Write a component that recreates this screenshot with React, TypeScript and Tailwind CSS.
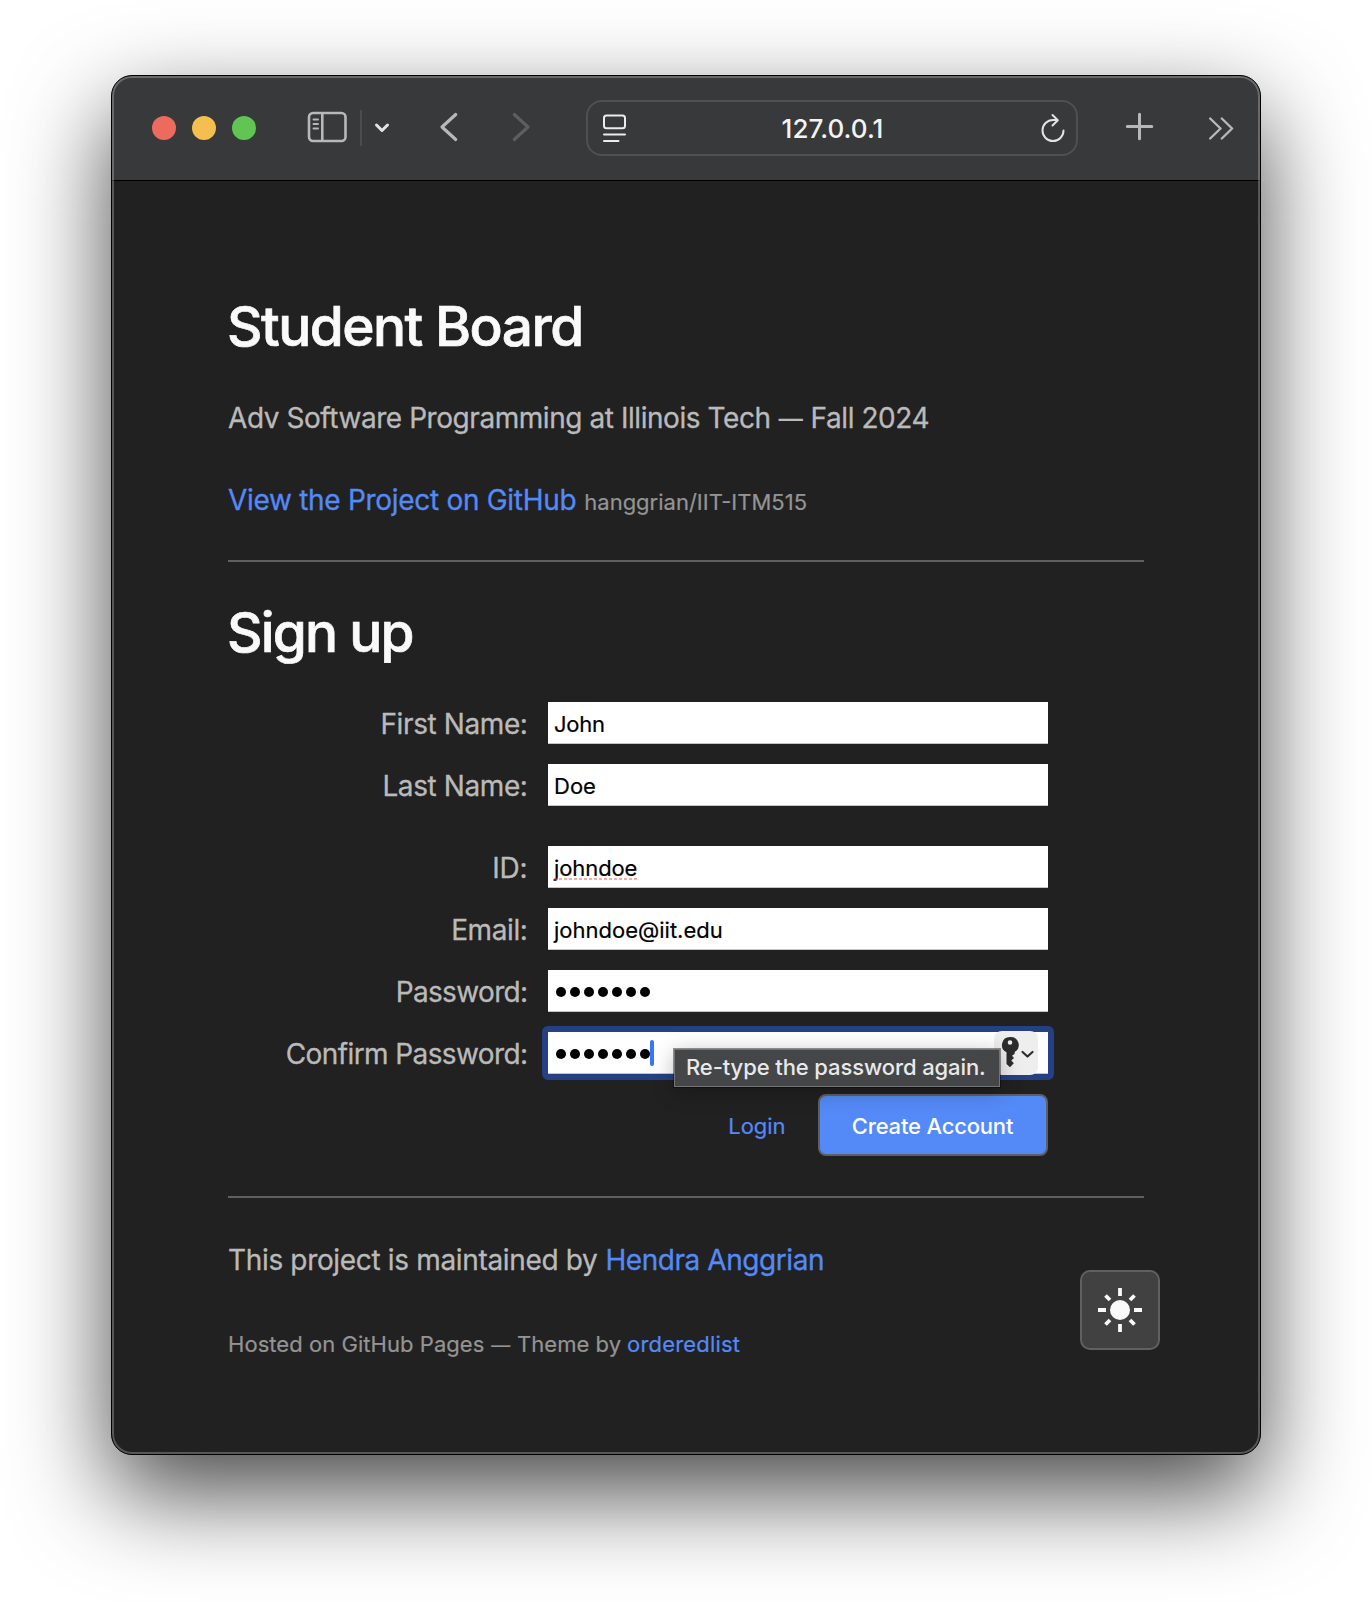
import React from "react";

const rows = [
  { label: "First Name:", value: "John", ls: "tracking-[-0.4px]", vls: "tracking-[-0.25px]" },
  { label: "Last Name:", value: "Doe", ls: "tracking-[-0.4px]", vls: "tracking-normal" },
  { label: "ID:", value: "johndoe", ls: "tracking-[-0.2px]", vls: "tracking-[-0.1px]", gap: true, misspelled: true },
  { label: "Email:", value: "johndoe@iit.edu", ls: "tracking-[-0.4px]", vls: "tracking-normal" },
  { label: "Password:", password: true, ls: "tracking-[-0.65px]" },
  { label: "Confirm Password:", password: true, focused: true, ls: "tracking-[-0.6px]" },
];

function Dots() {
  return (
    <div className="mt-[2px] flex gap-1">
      {Array.from({ length: 7 }, (_, i) => (
        <span key={i} className="size-[10px] rounded-full bg-black" />
      ))}
    </div>
  );
}

function Toolbar() {
  return (
    <header className="flex h-[105px] shrink-0 items-center border-b border-black bg-[#38393a]">
      <div className="ml-10 flex gap-4">
        <span className="size-6 rounded-full bg-[#ed6a5e]" />
        <span className="size-6 rounded-full bg-[#f5bf4f]" />
        <span className="size-6 rounded-full bg-[#61c554]" />
      </div>
      <svg className="-mt-0.5 ml-[51px] h-[32px] w-[42px] shrink-0" viewBox="0 0 42 32" fill="none" stroke="#b7b8ba">
        <rect x="2" y="2" width="36.500" height="28" rx="4" strokeWidth="2.600" />
        <path d="M15.300 2v28" strokeWidth="2.600" />
        <path d="M6.500 8.500h4.500M6.500 13h4.500M6.500 17.500h4.500" strokeWidth="1.900" strokeLinecap="round" />
      </svg>
      <span className="ml-[11px] h-9 w-0.5 shrink-0 bg-[#4b4c4d]" />
      <svg className="ml-[11px] h-[12px] w-[18px] shrink-0" viewBox="0 0 18 12" fill="none" stroke="#e3e3e4" strokeWidth="3" strokeLinecap="round" strokeLinejoin="round">
        <path d="M3.500 3L9 8.500 14.500 3" />
      </svg>
      <svg className="-mt-0.5 ml-[48px] h-[32px] w-[20px] shrink-0" viewBox="0 0 20 32" fill="none" stroke="#b7b8ba" strokeWidth="3.200" strokeLinecap="round" strokeLinejoin="round">
        <path d="M16.700 3.500L3 16l13.700 12.500" />
      </svg>
      <svg className="-mt-0.5 ml-[53px] h-[32px] w-[20px] shrink-0" viewBox="0 0 20 32" fill="none" stroke="#5d5e5f" strokeWidth="3.200" strokeLinecap="round" strokeLinejoin="round">
        <path d="M2.300 3.500L16 16 2.300 28.500" />
      </svg>
      <div className="ml-[54px] flex h-14 w-[492px] shrink-0 items-center justify-between rounded-[16px] border-2 border-[#4f5051] pl-[14px] pr-[9px]">
        <svg className="h-7 w-6" viewBox="0 0 24 28" fill="none" stroke="#ececed" strokeWidth="2" strokeLinecap="round">
          <rect x="2" y="1.500" width="21" height="12.800" rx="2.500" />
          <path d="M2 20.500h21M2 27h14.500" />
        </svg>
        <span className="mt-0.5 text-[26px] font-medium leading-8 tracking-[0.05px] text-[#f3f3f3]">127.0.0.1</span>
        <svg className="h-8 w-[28px]" viewBox="0 0 28 32" fill="none" stroke="#e3e3e4" strokeWidth="2" strokeLinecap="round" strokeLinejoin="round">
          <path d="M24.500 18.500A10.500 10.500 0 1 1 14 8h4" />
          <path d="M13.500 3l5.300 5.200-5.300 5.300" />
        </svg>
      </div>
      <svg className="-mt-0.5 ml-[46px] size-[32px] shrink-0" viewBox="0 0 32 32" fill="none" stroke="#b7b8ba" strokeWidth="3" strokeLinecap="round">
        <path d="M15.500 3.300v24.500M3.300 15.500h24.500" />
      </svg>
      <svg className="ml-[52px] h-[24px] w-[26px] shrink-0" viewBox="0 0 26 24" fill="none" stroke="#b7b8ba" strokeWidth="2.400" strokeLinecap="round" strokeLinejoin="round">
        <path d="M2.200 2.500l10.300 10L2.200 22.500M13.800 2.500l10.300 10-10.300 10" />
      </svg>
    </header>
  );
}

function FocusedExtras() {
  return (
    <>
      <span className="h-[26px] w-1 rounded-full bg-[#3478f6]" />
      <div className="absolute right-[10px] top-[-1px] flex h-11 w-11 rounded-[8px] bg-[#eeeeee]">
        <svg className="size-11" viewBox="0 0 44 44">
          <path
            fillRule="evenodd"
            fill="#2d2d2d"
            d="M16 6a8 8 0 0 0-3.500 15.200V33l3.500 3.200 3.800-4-2.500-2.700 2.700-2.500-2-2.300 2.700-2v-1.800A8 8 0 0 0 16 6zm0 3.200a2.300 2.300 0 1 1 0 4.600 2.300 2.300 0 0 1 0-4.600z"
          />
          <path d="M28.500 21l5 4.500 5-4.500" fill="none" stroke="#2d2d2d" strokeWidth="2.200" strokeLinecap="round" strokeLinejoin="round" />
        </svg>
      </div>
      <div className="absolute left-[126px] top-[17px] z-10 h-[38px] w-[326px] whitespace-nowrap border border-[#747576] bg-[#454647] pl-[11px] text-[22px] font-medium leading-[35px] tracking-[-0.1px] text-[#e9e9e9] shadow-[0_0_0_1px_rgba(0,0,0,0.4),0_4px_22px_rgba(0,0,0,0.28)]">
        Re-type the password again.
      </div>
    </>
  );
}

function Form() {
  return (
    <form className="mt-[38px] flex flex-col gap-5">
      {rows.map((r) => (
        <div key={r.label} className={r.gap ? "mt-5 flex h-[42px] gap-5" : "flex h-[42px] gap-5"}>
          <label className={`w-[300px] whitespace-nowrap pr-[0.5px] text-right text-[28px] leading-[45px] [-webkit-text-stroke:0.3px] ${r.ls}`}>{r.label}</label>
          <div
            className={
              r.focused
                ? "relative flex w-[500px] items-center border-b border-[#c4c4c4] bg-white pl-2 before:absolute before:-bottom-[7px] before:-left-[6px] before:-right-[6px] before:-top-[6px] before:rounded-[6px] before:border-[6px] before:border-[#254184]"
                : "relative flex w-[500px] items-center border-b border-[#c4c4c4] bg-white pl-2"
            }
          >
            {r.password ? (
              <Dots />
            ) : (
              <span className={`relative top-0.5 ml-[-2px] text-[22px] leading-[43px] text-black [-webkit-text-stroke:0.2px] ${r.vls}`}>
                {r.value}
                {r.misspelled && (
                  <svg className="absolute left-0 top-[31px] h-[2px] w-full">
                    <path d="M0 1h84" stroke="#ef5b55" strokeWidth="1.100" strokeDasharray="3 2" />
                  </svg>
                )}
              </span>
            )}
            {r.focused && <FocusedExtras />}
          </div>
        </div>
      ))}
      <div className="flex h-[62px] w-[820px] items-center justify-end">
        <a className="mr-[32.500px] pt-0.5 text-[22px] leading-8 tracking-[-0.05px] text-[#548af7] [-webkit-text-stroke:0.2px]">Login</a>
        <button type="button" className="h-[62px] w-[230px] rounded-[8px] border-2 border-[#606060] bg-[#548af7] pr-px pt-0.5 text-[22px] font-medium leading-8 tracking-[-0.18px] text-white">
          Create Account
        </button>
      </div>
    </form>
  );
}

export default function App() {
  return (
    <div className="h-[1602px] w-[1372px] overflow-hidden bg-white pl-[111px] pt-[75px] font-['Inter',sans-serif]">
      <div className="relative flex h-[1380px] w-[1150px] flex-col overflow-hidden rounded-[21px] border border-black bg-[#212121] shadow-[0_38px_96px_rgba(0,0,0,0.72)]">
        <Toolbar />
        <main className="px-[116px] pt-[113px] text-[#bababa]">
          <h1 className="-ml-px whitespace-nowrap text-[55px] font-medium leading-[64px] tracking-[-1.52px] text-[#fafafa] [-webkit-text-stroke:0.7px]">Student Board</h1>
          <p className="mt-10 h-10 whitespace-nowrap text-[28px] leading-10 tracking-[-0.44px] [-webkit-text-stroke:0.3px]">
            Adv Software Programming at Illinois Tech <span className="relative -top-px mx-[0.8px] text-[24px] leading-none">—</span> Fall 2024
          </p>
          <p className="mt-[42px] flex h-10 items-baseline whitespace-nowrap text-[28px] leading-10">
            <a className="tracking-[-0.3px] text-[#548af7] [-webkit-text-stroke:0.3px]">View the Project on GitHub</a>
            <small className="ml-[8px] text-[22px] text-[#949494] [-webkit-text-stroke:0.2px]">hanggrian/IIT-ITM515</small>
          </p>
          <hr className="mt-10 h-0.5 border-0 bg-[#606060]" />
          <h2 className="-ml-px mt-[38px] text-[55px] font-medium leading-[64px] tracking-[-1.8px] text-[#fafafa] [-webkit-text-stroke:0.7px]">Sign up</h2>
          <Form />
          <hr className="mt-10 h-0.5 border-0 bg-[#606060]" />
          <p className="mt-[42px] flex whitespace-nowrap text-[28px] leading-10 [-webkit-text-stroke:0.3px]">
            <span className="tracking-[-0.34px]">This project is maintained by</span>
            <a className="ml-[8px] tracking-[-0.43px] text-[#548af7]">Hendra Anggrian</a>
          </p>
          <p className="mt-[44px] flex h-10 whitespace-nowrap text-[22px] leading-10 text-[#949494] [-webkit-text-stroke:0.2px]">
            <span className="tracking-[0.05px]">
              Hosted on GitHub Pages <span className="mx-[0.500px] text-[19px] leading-none">—</span> Theme by
            </span>
            <a className="ml-[6px] tracking-[0.18px] text-[#548af7]">orderedlist</a>
          </p>
        </main>
        <button type="button" className="absolute bottom-[104px] right-[100px] size-20 rounded-[10px] border-2 border-[#606060] bg-[#414141]">
          <svg className="size-[76px]" viewBox="-38 -38 76 76" stroke="#fafafa" strokeWidth="3.800">
            <circle r="10" fill="#fafafa" stroke="none" />
            <path d="M0-22v8M0 14v8M-22 0h8M14 0h8M-14.500-14.500l4.500 4.500M10 10l4.500 4.500M-14.500 14.500l4.500-4.500M10-10l4.500-4.500" />
          </svg>
        </button>
        <div className="pointer-events-none absolute inset-0 rounded-[20px] border-2 border-white/25" />
      </div>
    </div>
  );
}
